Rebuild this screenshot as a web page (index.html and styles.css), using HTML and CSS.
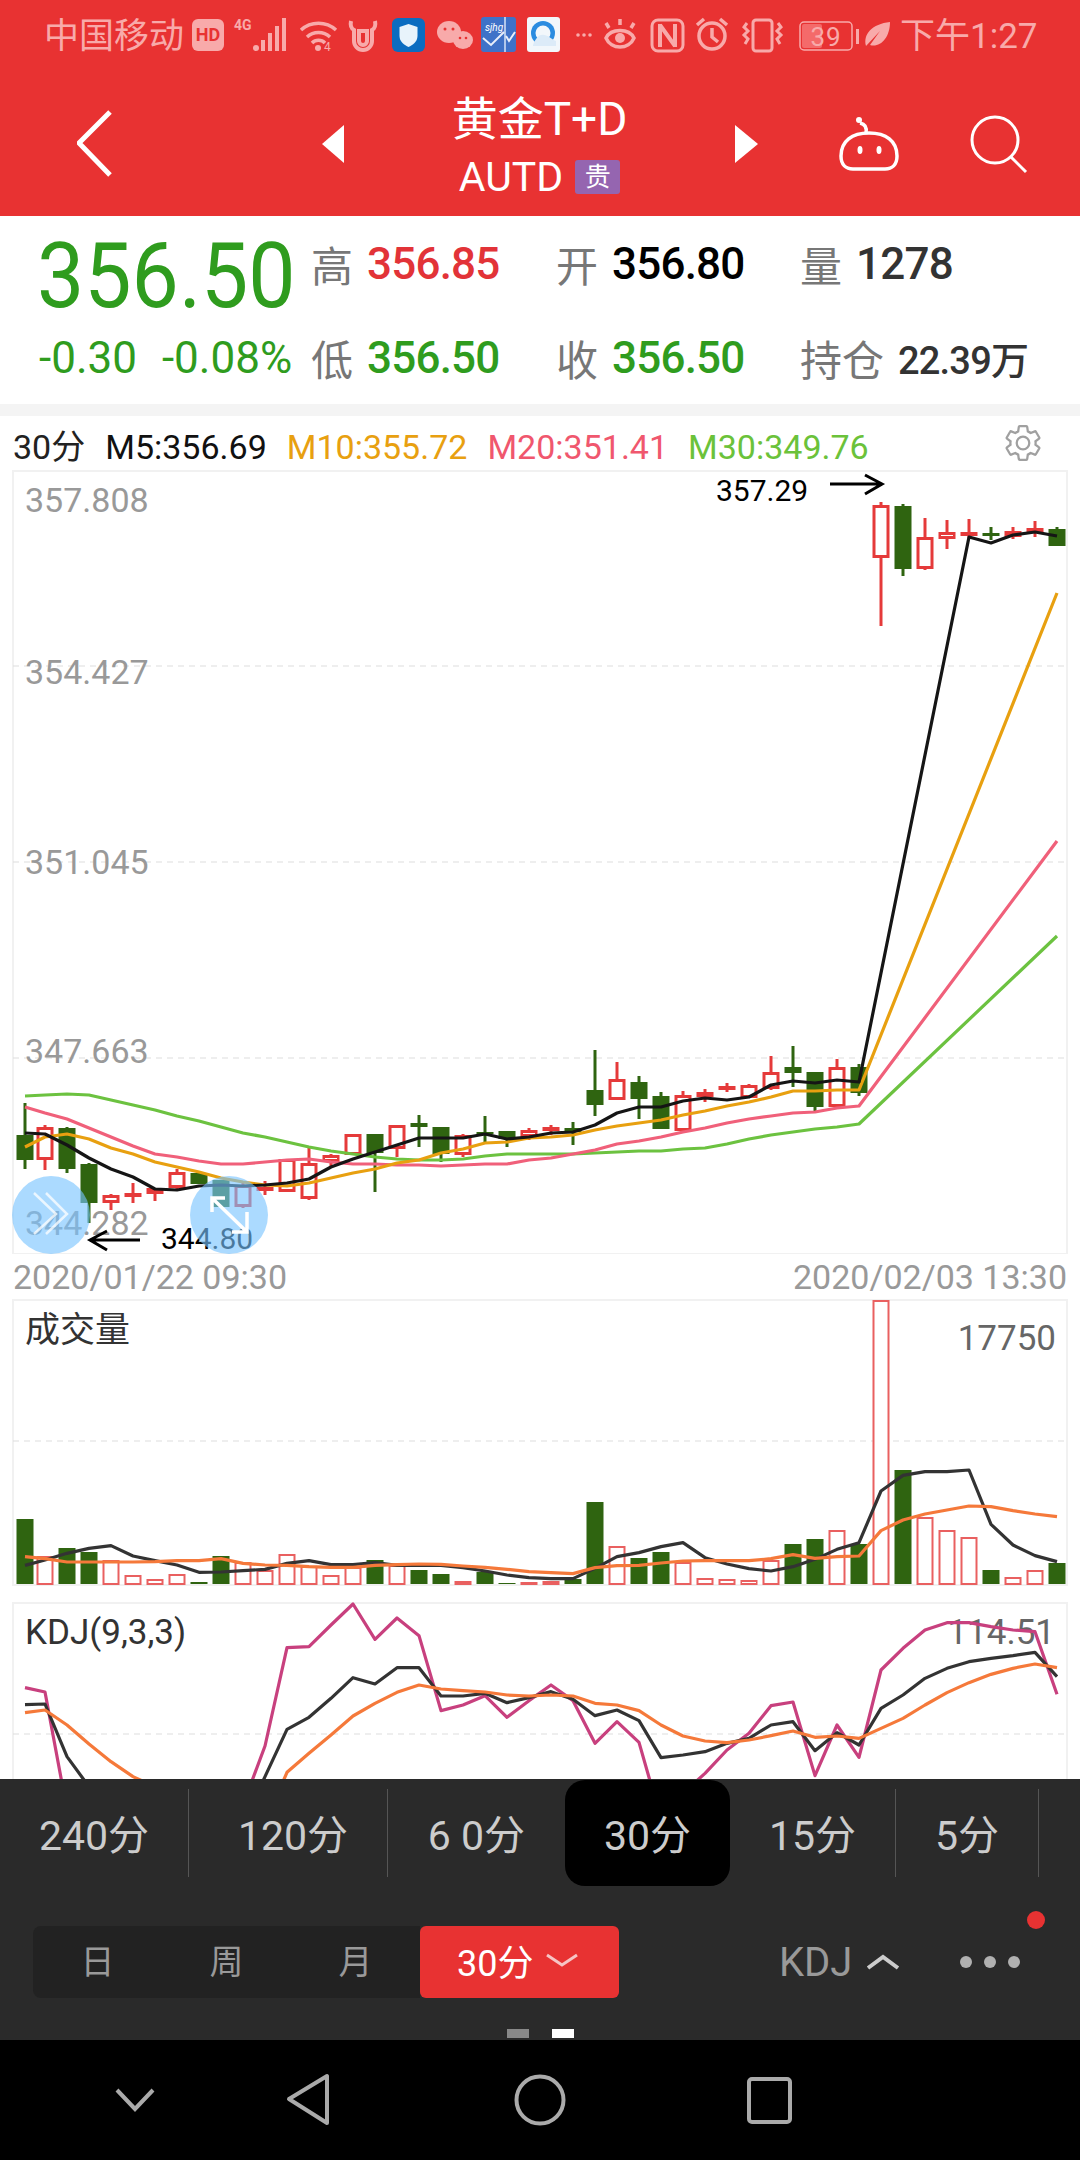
FILE: index.html
```html
<!DOCTYPE html>
<html lang="zh-CN">
<head>
  <meta charset="UTF-8">
  <title>黄金T+D</title>
  <link rel="stylesheet" href="styles.css">
</head>
<body>
  <header class="top">
    <div class="status">
      <span class="carrier">中国移动</span>
      <svg class="status-icons" width="698" height="40" viewBox="192 18 698 40">
        <rect x="192" y="21" width="32" height="32" rx="6" fill="#f8aaaa"/>
        <text x="208" y="43" class="ic-hd">HD</text>
        <text x="234" y="32" class="ic-4g">4G</text>
        <g fill="#f8aaaa">
          <circle cx="256" cy="50" r="3"/>
          <rect x="261" y="42" width="4" height="11"/>
          <rect x="268" y="35" width="4" height="18"/>
          <rect x="275" y="28" width="4" height="25"/>
          <rect x="282" y="20" width="4" height="33"/>
        </g>
        <g fill="none" stroke="#f8aaaa" stroke-width="3.5">
          <path d="M301 32a26 26 0 0 1 35 0"/>
          <path d="M307 39a17 17 0 0 1 23 0"/>
          <path d="M312 45a9 9 0 0 1 13 0"/>
        </g>
        <circle cx="318" cy="50" r="3" fill="#f8aaaa"/>
        <text x="324" y="53" class="ic-small">4</text>
        <path d="M351 23c-1 5 1 8 3 9v11a9 9 0 0 0 18 0V32c2-1 4-4 3-9M359 33h8v10a4 4 0 0 1-8 0z" fill="none" stroke="#f8aaaa" stroke-width="4"/>
        <rect x="392" y="20" width="33" height="34" rx="6" fill="#0b6cc0"/>
        <path d="M408.500 26l9 3v9c0 6-5 9-9 11-4-2-9-5-9-11v-9z" fill="#e8f3fb"/>
        <g fill="#f8aaaa">
          <ellipse cx="449" cy="34" rx="12" ry="11"/>
          <ellipse cx="463" cy="42" rx="10" ry="9"/>
        </g>
        <g fill="#e83232">
          <circle cx="445" cy="31" r="1.500"/>
          <circle cx="453" cy="31" r="1.500"/>
          <circle cx="460" cy="40" r="1.300"/>
          <circle cx="466" cy="40" r="1.300"/>
        </g>
        <rect x="481" y="19" width="35" height="35" rx="3" fill="#3f72c8"/>
        <path d="M505 19v35" stroke="#d8e4f7" stroke-width="1.500"/>
        <path d="M483 40l8 7 13-13M506 38l3 5 6-9" fill="none" stroke="#e8eef9" stroke-width="2"/>
        <text x="485" y="33" class="ic-app">sjhg</text>
        <rect x="527" y="19" width="33" height="35" rx="3" fill="#f2f7fb"/>
        <circle cx="543" cy="35" r="12" fill="#2b8ce0"/>
        <circle cx="543" cy="35" r="7.500" fill="#f2f7fb"/>
        <path d="M533 47c3-8 7-11 11-10 4 0 7 4 12 6v5h-23z" fill="#dcebf8"/>
        <g fill="#f8aaaa">
          <circle cx="578" cy="37" r="1.800"/>
          <circle cx="584" cy="37" r="1.800"/>
          <circle cx="590" cy="37" r="1.800"/>
        </g>
        <g fill="none" stroke="#f8aaaa" stroke-width="3.500">
          <path d="M606 40c5-10 23-10 28 0-5 12-23 12-28 0z"/>
          <path d="M606 25l3 5M620 21v6M634 25l-3 5"/>
        </g>
        <circle cx="620" cy="40" r="5" fill="#f8aaaa"/>
        <rect x="652" y="22" width="31" height="31" rx="6" fill="none" stroke="#f8aaaa" stroke-width="3"/>
        <path d="M660 26v23M675 26v23M660 27l15 21" fill="none" stroke="#f8aaaa" stroke-width="4"/>
        <g fill="none" stroke="#f8aaaa" stroke-width="3.500">
          <circle cx="712" cy="38" r="13"/>
          <path d="M697 27l7-6M727 27l-7-6M712 30v9l6 5"/>
        </g>
        <g fill="none" stroke="#f8aaaa" stroke-width="3">
          <rect x="753" y="22" width="19" height="31" rx="3"/>
          <path d="M747 25l-3 4 4 4-4 4 4 4-3 5M778 25l3 4-4 4 4 4-4 4 3 5"/>
        </g>
        <rect x="800" y="24" width="52" height="28" rx="4" fill="none" stroke="#f8aaaa" stroke-width="1.500"/>
        <rect x="802" y="26" width="20" height="24" rx="2" fill="#f46a6a"/>
        <text x="826" y="48" class="ic-batt">39</text>
        <rect x="856" y="31" width="3" height="15" fill="#f8aaaa"/>
        <path d="M866 48c-3-12 6-22 24-24 0 16-10 26-20 23l10-14" fill="#f8aaaa"/>
      </svg>
      <span class="clock">下午1:27</span>
    </div>

    <nav class="bar">
      <svg class="back" width="38" height="70" viewBox="77 110 38 70"><path d="M110 113l-31 31 31 32" fill="none" stroke="#fff" stroke-width="5"/></svg>
      <svg class="prev" width="22" height="38" viewBox="0 0 22 38"><path d="M22 0L0 19l22 19z" fill="#fff"/></svg>
      <div class="title">
        <div class="name">黄金T+D</div>
        <div class="code">AUTD<span class="tag">贵</span></div>
      </div>
      <svg class="next" width="23" height="38" viewBox="0 0 23 38"><path d="M0 0l23 19L0 38z" fill="#fff"/></svg>
      <svg class="robot" width="62" height="60" viewBox="838 118 62 60">
        <g fill="none" stroke="#fff" stroke-width="3.500">
          <path d="M841 160c0-15 11-23 28-23s28 8 28 23c0 9-5 13-12 13h-32c-7 0-12-4-12-13z"/>
          <path d="M866 137c1-6-1-9-6-10"/>
        </g>
        <circle cx="859" cy="124" r="3" fill="#fff"/>
        <ellipse cx="860" cy="154" rx="2.500" ry="4" fill="#fff"/>
        <ellipse cx="879" cy="154" rx="2.500" ry="4" fill="#fff"/>
      </svg>
      <svg class="search" width="60" height="60" viewBox="968 116 60 60">
        <circle cx="995" cy="142" r="23" fill="none" stroke="#fff" stroke-width="3"/>
        <path d="M1011 159l15 15" stroke="#fff" stroke-width="3"/>
      </svg>
    </nav>
  </header>

  <section class="quote">
    <div class="price">356.50</div>
    <div class="stat"><span class="lbl">高</span><b class="up">356.85</b></div>
    <div class="stat"><span class="lbl">开</span><b class="black">356.80</b></div>
    <div class="stat"><span class="lbl">量</span><b class="dark">1278</b></div>
    <div class="change"><span>-0.30</span><span>-0.08%</span></div>
    <div class="stat"><span class="lbl">低</span><b class="down">356.50</b></div>
    <div class="stat"><span class="lbl">收</span><b class="down">356.50</b></div>
    <div class="stat"><span class="lbl">持仓</span><b class="dark small">22.39万</b></div>
  </section>

  <main class="chart">
    <div class="legend">
      <span class="ma-period">30分</span>
      <span class="ma-m5">M5:356.69</span>
      <span class="ma-m10">M10:355.72</span>
      <span class="ma-m20">M20:351.41</span>
      <span class="ma-m30">M30:349.76</span>
      <svg class="gear" width="42" height="42" viewBox="0 0 24 24"><path d="M19.14 12.94c.04-.3.06-.61.06-.94 0-.32-.02-.64-.07-.94l2.03-1.58a.49.49 0 0 0 .12-.61l-1.92-3.32a.488.488 0 0 0-.59-.22l-2.39.96c-.5-.38-1.03-.7-1.62-.94l-.36-2.54a.484.484 0 0 0-.48-.41h-3.84c-.24 0-.43.17-.47.41l-.36 2.54c-.59.24-1.13.57-1.62.94l-2.39-.96c-.22-.08-.47 0-.59.22L2.74 8.87c-.12.21-.08.47.12.61l2.03 1.58c-.05.3-.09.63-.09.94s.02.64.07.94l-2.03 1.58a.49.49 0 0 0-.12.61l1.92 3.32c.12.22.37.29.59.22l2.39-.96c.5.38 1.03.7 1.62.94l.36 2.54c.05.24.24.41.48.41h3.84c.24 0 .44-.17.47-.41l.36-2.54c.59-.24 1.13-.56 1.62-.94l2.39.96c.22.08.47 0 .59-.22l1.92-3.32c.12-.22.07-.47-.12-.61l-2.01-1.58zM12 15.6A3.6 3.6 0 1 1 12 8.400a3.600 3.600 0 0 1 0 7.200z" fill="none" stroke="#a0a0a0" stroke-width="1.300"/></svg>
    </div>

    <svg class="plot" width="1080" height="784" viewBox="0 470 1080 784">
      <rect x="13" y="471" width="1054" height="783" class="frame"/>
      <path d="M13 666H1065M13 862H1065M13 1058H1065" class="grid"/>
      <g class="axis">
        <text x="25" y="512">357.808</text>
        <text x="25" y="684">354.427</text>
        <text x="25" y="874">351.045</text>
        <text x="25" y="1063">347.663</text>
        <text x="25" y="1235">344.282</text>
      </g>
      <g id="candles"></g>
      <g id="maLines"></g>
      <text x="716" y="501" class="mark">357.29</text>
      <path d="M830 484H881M865 475l17 9-17 10" class="arrow"/>
      <text x="161" y="1249" class="mark">344.80</text>
      <path d="M140 1240H90M107 1231l-17 9 17 10" class="arrow"/>
      <circle cx="51" cy="1215" r="39" class="float"/>
      <path d="M34 1193l22 21-22 20M46 1193l21 21-21 20" class="float-icon thin"/>
      <circle cx="229" cy="1215" r="39" class="float"/>
      <path d="M212 1212V1198H225M212 1198L247 1232M232 1232H247V1212" class="float-icon"/>
    </svg>

    <div class="dates"><span>2020/01/22 09:30</span><span>2020/02/03 13:30</span></div>

    <svg class="plot" width="1080" height="303" viewBox="0 1299 1080 303">
      <rect x="13" y="1300" width="1054" height="285" class="frame"/>
      <path d="M13 1441H1065" class="grid"/>
      <g id="volume"></g>
      <text x="25" y="1342" class="panel-name">成交量</text>
      <text x="1056" y="1350" class="panel-max">17750</text>
    </svg>

    <svg class="plot" width="1080" height="177" viewBox="0 1602 1080 177">
      <rect x="13" y="1603" width="1054" height="300" class="frame"/>
      <path d="M13 1734H1065" class="grid"/>
      <text x="25" y="1644" class="panel-name">KDJ(9,3,3)</text>
      <text x="1055" y="1644" class="panel-max">114.51</text>
      <g id="kdj"></g>
    </svg>
  </main>

  <footer class="dock">
    <div class="periods">
      <div class="period">240分</div>
      <div class="period nudge">120分</div>
      <div class="period no-line">6 0分</div>
      <div class="period active">30分</div>
      <div class="period">15分</div>
      <div class="period">5分</div>
    </div>
    <div class="tools">
      <div class="segment">
        <div class="seg">日</div>
        <div class="seg">周</div>
        <div class="seg">月</div>
      </div>
      <div class="seg-on">30分
        <svg width="34" height="14" viewBox="0 0 34 14"><path d="M2 2l15 10L32 2" fill="none" stroke="#f6c4c4" stroke-width="3"/></svg>
      </div>
      <div class="indicator">KDJ
        <svg width="34" height="16" viewBox="0 0 34 16"><path d="M2 14L17 3l15 11" fill="none" stroke="#ccc" stroke-width="4"/></svg>
      </div>
      <div class="more"><i></i><i></i><i></i></div>
    </div>
    <span class="notice"></span>
    <div class="pager"><i></i><i class="on"></i></div>
  </footer>

  <svg class="softkeys" width="1080" height="120" viewBox="0 2040 1080 120">
    <g fill="none" stroke="#aaa" stroke-width="4">
      <path d="M117 2090l18 19 18-19"/>
      <path d="M327 2076v47l-38-24z" stroke-linejoin="round"/>
      <circle cx="540" cy="2100" r="23.500"/>
      <rect x="749" y="2079" width="41" height="43" rx="3"/>
    </g>
  </svg>

  <script src="chart.js"></script>
</body>
</html>
```

FILE: styles.css
```css
* {
  box-sizing: border-box;
}

html, body {
  margin: 0;
  width: 1080px;
  height: 2160px;
  overflow: hidden;
  background: #fff;
  font-family: Roboto, "Noto Sans CJK SC", sans-serif;
}

svg {
  display: block;
  flex: none;
}

.top {
  background: #e83232;
  height: 216px;
}

.status {
  display: flex;
  align-items: center;
  height: 72px;
  color: #f8aaaa;
  font-size: 35px;
  line-height: 1;
}

.carrier {
  margin-left: 44px;
  width: 148px;
}

.clock {
  margin-left: 10px;
  white-space: nowrap;
}

.ic-hd { font: bold 18px Roboto, sans-serif; fill: #e83232; text-anchor: middle; }
.ic-4g { font: bold 14px Roboto, sans-serif; fill: #f8aaaa; }
.ic-small { font: 12px Roboto, sans-serif; fill: #f8aaaa; }
.ic-app { font: italic 10px Roboto, sans-serif; fill: #fff; }
.ic-batt { font: 26px Roboto, sans-serif; fill: #f8aaaa; text-anchor: middle; letter-spacing: 1px; }

.bar {
  display: flex;
  align-items: center;
  height: 144px;
  padding-left: 77px;
}

.prev { margin-left: 207px; }

.title {
  width: 391px;
  text-align: center;
  color: #fff;
}

.name {
  font-size: 46px;
  line-height: 52px;
  margin-bottom: 14px;
}

.code {
  display: flex;
  justify-content: center;
  align-items: center;
  gap: 12px;
  font-size: 41px;
  line-height: 36px;
}

.tag {
  width: 45px;
  height: 34px;
  background: #9565b0;
  border-radius: 3px;
  font-size: 26px;
  line-height: 34px;
}

.robot { margin-left: 80px; }
.search { margin-left: 68px; }

.quote {
  display: grid;
  grid-template-columns: 272px 245px 244px 1fr;
  grid-template-rows: 95px 93px;
  height: 188px;
  padding-left: 39px;
}

.price {
  color: #2f9c1e;
  font-size: 90px;
  line-height: 122px;
  height: 95px;
  margin-left: -2px;
  transform: scaleX(.935);
  transform-origin: left center;
}

.stat {
  display: flex;
  align-items: center;
  gap: 14px;
  font-size: 42px;
}

.stat b {
  font-weight: 500;
  font-size: 44px;
  letter-spacing: -.8px;
}

.lbl { color: #777; }
.up { color: #e23338; }
.down { color: #2f9c1e; }
.black { color: #000; }
.dark { color: #333; }
.stat .small { font-size: 38px; }

.change {
  display: flex;
  gap: 25px;
  color: #2f9c1e;
  font-size: 44px;
  align-items: center;
}

.chart {
  border-top: 12px solid #f4f4f4;
  height: 1375px;
  overflow: hidden;
}

.legend {
  display: flex;
  align-items: center;
  height: 54px;
  padding: 8px 36px 0 13px;
  font-size: 34px;
  gap: 20px;
  line-height: 1;
}

.ma-period { color: #222; }
.ma-m5 { color: #111; }
.ma-m10 { color: #e8a010; }
.ma-m20 { color: #f0576e; }
.ma-m30 { color: #6bc23a; }
.gear { margin: -8px 0 0 auto; }

.frame {
  fill: none;
  stroke: #f1f1f1;
  stroke-width: 2;
}

.grid {
  fill: none;
  stroke: #ddd;
  stroke-width: 1;
  stroke-dasharray: 6 5;
}

.axis text {
  font-size: 34px;
  fill: #999;
}

.mark {
  font-size: 30px;
  fill: #000;
}

.arrow {
  fill: none;
  stroke: #000;
  stroke-width: 3;
}

.float {
  fill: rgb(120, 195, 255);
  fill-opacity: .62;
}

.float-icon {
  fill: none;
  stroke: #fff;
  stroke-width: 3.500;
}

.float-icon.thin {
  stroke-width: 2.500;
  stroke-opacity: .75;
}

.dates {
  display: flex;
  justify-content: space-between;
  align-items: center;
  height: 45px;
  padding: 0 13px;
  color: #999;
  font-size: 34px;
}

.panel-name {
  font-size: 35px;
  fill: #333;
}

.panel-max {
  font-size: 35px;
  fill: #666;
  text-anchor: end;
}

.dock {
  position: relative;
  height: 261px;
  background: #2a2a2a;
  color: #ccc;
}

.periods {
  display: grid;
  grid-template-columns: 189px 199px 177px 165px 166px 143px;
  align-items: start;
  height: 107px;
  padding-top: 1px;
}

.period {
  height: 88px;
  margin-top: 9px;
  border-right: 1px solid #555;
  text-align: center;
  font-size: 41px;
  line-height: 94px;
}

.period.nudge { padding-left: 10px; }
.period.no-line { border-right: 0; }

.period.active {
  height: 106px;
  margin-top: 0;
  background: #000;
  border: 0;
  border-radius: 20px;
  line-height: 112px;
}

.tools {
  display: flex;
  align-items: center;
  height: 72px;
  margin-top: 40px;
  padding-left: 33px;
}

.segment {
  display: flex;
  background: #222;
  border-radius: 8px 0 0 8px;
  height: 72px;
}

.seg {
  width: 129px;
  text-align: center;
  color: #999;
  font-size: 34px;
  line-height: 72px;
}

.seg-on {
  display: flex;
  align-items: center;
  gap: 12px;
  width: 199px;
  height: 72px;
  padding: 0 0 4px 37px;
  background: #e83232;
  border-radius: 6px;
  color: #fff;
  font-size: 36px;
}

.indicator {
  display: flex;
  align-items: center;
  gap: 14px;
  margin-left: 160px;
  color: #999;
  font-size: 40px;
}

.more {
  display: flex;
  gap: 12px;
  margin-left: 60px;
}

.more i {
  width: 12px;
  height: 12px;
  border-radius: 50%;
  background: #b0b0b0;
}

.notice {
  position: absolute;
  left: 1027px;
  top: 132px;
  width: 18px;
  height: 18px;
  border-radius: 50%;
  background: #e83232;
}

.pager {
  display: flex;
  justify-content: center;
  gap: 23px;
  margin-top: 31px;
}

.pager i {
  width: 22px;
  height: 9px;
  background: #888;
}

.pager i.on { background: #fff; }

.softkeys {
  background: #000;
}
```

FILE: chart.js
```js
// price data traced off the screen, all y values are page pixels
// [high, top of body, bottom of body, low, rising?]
const candles = [
  [1103, 1135, 1160, 1169, 0], [1125, 1127, 1160, 1170, 1], [1127, 1128, 1169, 1173, 0], [1163, 1164, 1203, 1223, 0],
  [1194, 1195, 1203, 1210, 1], [1183, 1193, 1196, 1203, 1], [1188, 1188, 1194, 1201, 1], [1169, 1172, 1188, 1190, 1],
  [1172, 1173, 1184, 1184, 0], [1180, 1180, 1207, 1207, 0], [1182, 1185, 1207, 1208, 1], [1181, 1187, 1190, 1195, 1],
  [1159, 1159, 1192, 1192, 1], [1148, 1163, 1199, 1200, 1], [1154, 1155, 1162, 1167, 1], [1134, 1134, 1155, 1155, 1],
  [1134, 1134, 1153, 1192, 0], [1125, 1125, 1149, 1157, 1], [1115, 1123, 1127, 1147, 0], [1127, 1127, 1154, 1162, 0],
  [1134, 1135, 1155, 1157, 1], [1116, 1132, 1134, 1142, 0], [1131, 1131, 1139, 1147, 0], [1128, 1130, 1137, 1140, 1],
  [1125, 1127, 1130, 1135, 1], [1122, 1128, 1132, 1145, 0], [1050, 1090, 1105, 1116, 0], [1062, 1079, 1100, 1100, 1],
  [1076, 1082, 1099, 1119, 0], [1092, 1096, 1129, 1129, 0], [1091, 1095, 1131, 1132, 1], [1089, 1092, 1097, 1102, 1],
  [1083, 1086, 1089, 1092, 1], [1084, 1085, 1098, 1098, 1], [1056, 1072, 1089, 1090, 1], [1046, 1067, 1073, 1087, 0],
  [1072, 1072, 1107, 1113, 0], [1059, 1067, 1107, 1107, 1], [1064, 1067, 1093, 1096, 0], [502, 505, 558, 626, 1],
  [504, 506, 569, 576, 0], [518, 537, 569, 570, 1], [520, 532, 539, 549, 1], [519, 532, 535, 538, 1],
  [527, 533, 536, 540, 0], [527, 531, 537, 539, 1], [521, 528, 533, 537, 1], [527, 529, 546, 546, 0]
];

// first 39 points are the bars up to the jump, then the last few
const ma5 = [1133, 1134, 1145, 1158, 1169, 1177, 1189, 1190, 1186, 1185, 1186, 1185, 1183, 1179, 1167, 1159, 1152, 1145, 1138, 1138, 1138, 1134, 1139, 1137, 1133, 1132, 1125, 1113, 1107, 1107, 1101, 1098, 1100, 1097, 1085, 1081, 1083, 1080, 1082];
const ma10 = [1147, 1137, 1134, 1139, 1148, 1154, 1162, 1167, 1172, 1178, 1182, 1185, 1186, 1183, 1178, 1173, 1169, 1163, 1160, 1153, 1149, 1143, 1142, 1138, 1137, 1135, 1130, 1126, 1123, 1120, 1115, 1111, 1106, 1102, 1097, 1091, 1091, 1090, 1090];
const ma20 = [1107, 1113, 1119, 1128, 1137, 1146, 1154, 1157, 1161, 1164, 1164, 1162, 1160, 1159, 1162, 1164, 1164, 1165, 1165, 1166, 1165, 1164, 1164, 1160, 1158, 1154, 1150, 1144, 1141, 1137, 1132, 1128, 1123, 1119, 1116, 1113, 1112, 1108, 1106];
const ma30 = [1096, 1095, 1094, 1095, 1100, 1105, 1110, 1116, 1121, 1127, 1133, 1137, 1142, 1147, 1151, 1154, 1157, 1159, 1160, 1160, 1159, 1156, 1154, 1154, 1154, 1154, 1153, 1152, 1151, 1151, 1149, 1148, 1144, 1139, 1135, 1132, 1129, 1127, 1124];

const volHeights = [65, 28, 36, 32, 24, 9, 5, 10, 2, 28, 22, 14, 30, 18, 9, 17, 24, 19, 14, 10, 3, 12, 1, 2, 3, 5, 82, 38, 26, 32, 22, 6, 5, 4, 24, 40, 45, 54, 40, 284, 114, 67, 54, 47, 14, 7, 14, 21];

// the two lower panels are read at 3x, from y = 1290
const volBlack = [826, 810, 790, 775, 767, 798, 812, 825, 847, 846, 842, 838, 820, 812, 824, 824, 818, 826, 826, 826, 833, 843, 855, 863, 866, 866, 835, 800, 788, 770, 758, 803, 822, 836, 843, 830, 808, 778, 758, 603, 556, 545, 545, 540, 703, 765, 797, 815];
const volOrange = [800, 806, 816, 816, 816, 816, 815, 812, 812, 806, 820, 825, 826, 830, 832, 832, 826, 824, 822, 823, 828, 832, 838, 845, 848, 851, 833, 827, 826, 819, 813, 812, 812, 812, 806, 794, 805, 800, 798, 722, 690, 672, 660, 648, 650, 662, 672, 680];
const kdjJ = [1193, 1206, 1560, 1700, 1700, 1700, 1700, 1700, 1700, 1700, 1545, 1368, 1073, 1070, 1005, 942, 1048, 984, 1037, 1262, 1245, 1217, 1282, 1232, 1185, 1232, 1360, 1295, 1357, 1588, 1510, 1450, 1380, 1330, 1247, 1236, 1457, 1305, 1402, 1140, 1075, 1020, 998, 998, 1010, 1020, 1025, 1213];
const kdjK = [1244, 1242, 1400, 1490, 1600, 1600, 1600, 1600, 1600, 1600, 1600, 1460, 1318, 1282, 1225, 1163, 1182, 1133, 1133, 1218, 1218, 1210, 1238, 1223, 1205, 1228, 1277, 1260, 1292, 1403, 1395, 1385, 1360, 1345, 1305, 1295, 1382, 1328, 1365, 1255, 1215, 1165, 1135, 1115, 1105, 1097, 1087, 1160];
const kdjD = [1268, 1260, 1305, 1362, 1415, 1460, 1490, 1600, 1600, 1600, 1600, 1600, 1447, 1390, 1335, 1278, 1240, 1207, 1185, 1197, 1202, 1206, 1215, 1218, 1215, 1218, 1240, 1245, 1262, 1305, 1338, 1353, 1358, 1350, 1337, 1323, 1342, 1338, 1345, 1315, 1285, 1245, 1208, 1178, 1153, 1135, 1122, 1133];

const RED = '#e53a3a';
const GREEN = '#2f6410';
const BAR_W = 17;
const LINE_W = 3.2;

function barX(i) {
  return i === 0 ? 25 : 23 + 22 * i;
}

function polyline(points, color, width) {
  const pts = points.map(p => p.join(',')).join(' ');
  return `<polyline points="${pts}" fill="none" stroke="${color}" stroke-width="${width}" stroke-linejoin="round"/>`;
}

// ma series: bars 0-38, then straight to the given tail points
function maPoints(values, tail) {
  return values.map((y, i) => [barX(i), y]).concat(tail);
}

function panelPoints(values) {
  return values.map((z, i) => [barX(i), 1290 + z / 3]);
}

function drawCandles() {
  let out = '';
  candles.forEach((c, i) => {
    const [high, top, bottom, low, up] = c;
    const x = barX(i);
    const color = up ? RED : GREEN;
    out += `<path d="M${x} ${high}V${low}" stroke="${color}" stroke-width="3"/>`;
    if (up) {
      out += `<rect x="${x - BAR_W / 2 + 1.5}" y="${top + 1.5}" width="${BAR_W - 3}" height="${Math.max(bottom - top - 3, 1)}" fill="#fff" stroke="${color}" stroke-width="3"/>`;
    } else {
      out += `<rect x="${x - BAR_W / 2}" y="${top}" width="${BAR_W}" height="${bottom - top}" fill="${color}"/>`;
    }
  });
  document.getElementById('candles').innerHTML = out;
}

function drawMa() {
  document.getElementById('maLines').innerHTML =
    polyline(maPoints(ma30, [[1057, 936]]), '#6cc240', LINE_W) +
    polyline(maPoints(ma20, [[1057, 841]]), '#f0607a', LINE_W) +
    polyline(maPoints(ma10, [[1057, 593]]), '#e8a010', LINE_W) +
    polyline(maPoints(ma5, [[969, 537], [991, 543], [1013, 535], [1035, 532], [1057, 536]]), '#151515', LINE_W);
}

function drawVolume() {
  let out = '';
  volHeights.forEach((h, i) => {
    const x = barX(i) - BAR_W / 2;
    if (candles[i][4]) {
      out += `<rect x="${x + 1}" y="${1585 - h}" width="${BAR_W - 2}" height="${Math.max(h - 1, 1)}" fill="#fff" stroke="#e96060" stroke-width="2"/>`;
    } else {
      out += `<rect x="${x}" y="${1584 - h}" width="${BAR_W}" height="${h}" fill="${GREEN}"/>`;
    }
  });
  out += polyline(panelPoints(volBlack), '#333', LINE_W);
  out += polyline(panelPoints(volOrange), '#f5793a', LINE_W);
  document.getElementById('volume').innerHTML = out;
}

function drawKdj() {
  document.getElementById('kdj').innerHTML =
    polyline(panelPoints(kdjJ), '#c8407e', LINE_W) +
    polyline(panelPoints(kdjK), '#333', LINE_W) +
    polyline(panelPoints(kdjD), '#f5793a', LINE_W);
}

drawCandles();
drawMa();
drawVolume();
drawKdj();
```
